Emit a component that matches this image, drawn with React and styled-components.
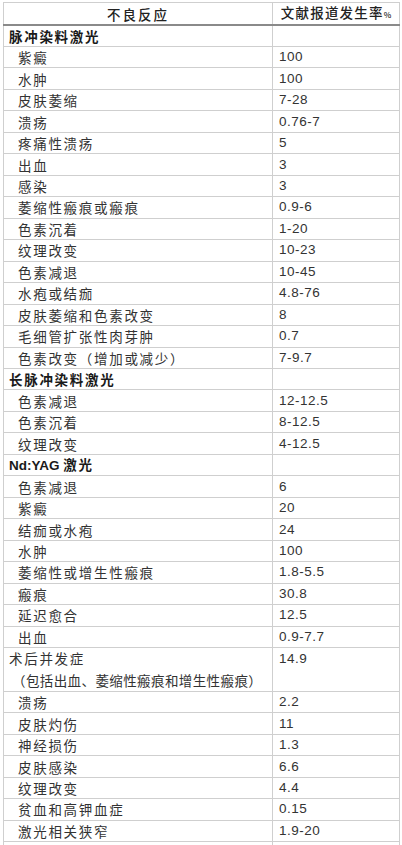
import React from 'react';
import styled, { createGlobalStyle } from 'styled-components';

const GlobalStyle = createGlobalStyle`
  html, body {
    margin: 0;
    padding: 0;
    background: #ffffff;
  }
  body {
    font-family: "Liberation Sans", "Noto Sans CJK SC", sans-serif;
    color: #333;
  }
`;

const Page = styled.div`
  padding: 2px 3px 0 3px;
  height: 845px;
  overflow: hidden;
  box-sizing: border-box;
`;

const Table = styled.table`
  width: 396px;
  border-collapse: collapse;
  table-layout: fixed;
  font-size: 13.5px;
`;

const Row = styled.tr`
  height: ${(p) => (p.$double ? '42.9px' : '21.47px')};
`;

const HeadRow = styled.tr`
  height: 22px;
`;

const HeadCell = styled.th`
  padding: 0;
  font-weight: 500;
  color: #222;
  text-align: center;
  border: 1px solid #cfcfcf;
  border-bottom: 2px solid #8a8a8a;
  line-height: 18px;
  letter-spacing: ${(p) => (p.$wide ? '2px' : '1.2px')};
  font-family: "Noto Sans CJK SC", sans-serif;
  white-space: nowrap;
`;

const Pct = styled.span`
  font-size: 8px;
  letter-spacing: 0;
`;

const Label = styled.td`
  padding: 0 0 0 ${(p) => (p.$indent ? '14px' : '5px')};
  border: 1px solid #cfcfcf;
  vertical-align: ${(p) => (p.$double ? 'top' : 'middle')};
  line-height: ${(p) => (p.$double ? '21.4px' : '18px')};
  font-family: "Noto Sans CJK SC", sans-serif;
  letter-spacing: 1.7px;
  font-weight: ${(p) => (p.$group ? 700 : 400)};
  color: ${(p) => (p.$group ? '#1a1a1a' : '#333')};
  white-space: nowrap;
  overflow: hidden;
`;

const Latin = styled.span`
  font-family: "Liberation Sans", sans-serif;
  letter-spacing: 0;
`;

const SubLine = styled.div`
  padding-left: 3px;
  letter-spacing: 0.4px;
`;

const Value = styled.td`
  padding: 0 0 0 6px;
  border: 1px solid #cfcfcf;
  vertical-align: ${(p) => (p.$top ? 'top' : 'middle')};
  line-height: ${(p) => (p.$top ? '21.4px' : '18px')};
  font-family: "Liberation Sans", sans-serif;
  letter-spacing: 0.5px;
  color: #333;
  white-space: nowrap;
`;

const rows = [
  { g: '脉冲染料激光' },
  ['紫癜', '100'],
  ['水肿', '100'],
  ['皮肤萎缩', '7-28'],
  ['溃疡', '0.76-7'],
  ['疼痛性溃疡', '5'],
  ['出血', '3'],
  ['感染', '3'],
  ['萎缩性瘢痕或瘢痕', '0.9-6'],
  ['色素沉着', '1-20'],
  ['纹理改变', '10-23'],
  ['色素减退', '10-45'],
  ['水疱或结痂', '4.8-76'],
  ['皮肤萎缩和色素改变', '8'],
  ['毛细管扩张性肉芽肿', '0.7'],
  ['色素改变（增加或减少）', '7-9.7'],
  { g: '长脉冲染料激光' },
  ['色素减退', '12-12.5'],
  ['色素沉着', '8-12.5'],
  ['纹理改变', '4-12.5'],
  { g: '激光', latin: 'Nd:YAG ' },
  ['色素减退', '6'],
  ['紫癜', '20'],
  ['结痂或水疱', '24'],
  ['水肿', '100'],
  ['萎缩性或增生性瘢痕', '1.8-5.5'],
  ['瘢痕', '30.8'],
  ['延迟愈合', '12.5'],
  ['出血', '0.9-7.7'],
  { d: ['术后并发症', '（包括出血、萎缩性瘢痕和增生性瘢痕）'], v: '14.9' },
  ['溃疡', '2.2'],
  ['皮肤灼伤', '11'],
  ['神经损伤', '1.3'],
  ['皮肤感染', '6.6'],
  ['纹理改变', '4.4'],
  ['贫血和高钾血症', '0.15'],
  ['激光相关狭窄', '1.9-20'],
  { g: '二氧化碳激光' },
];

const App = () => (
  <>
    <GlobalStyle />
    <Page>
      <Table>
        <colgroup>
          <col style={{ width: '269px' }} />
          <col style={{ width: '127px' }} />
        </colgroup>
        <thead>
          <HeadRow>
            <HeadCell $wide>不良反应</HeadCell>
            <HeadCell>
              文献报道发生率<Pct>%</Pct>
            </HeadCell>
          </HeadRow>
        </thead>
        <tbody>
          {rows.map((r, i) => {
            if (r.g) {
              return (
                <Row key={i}>
                  <Label $group>
                    {r.latin && <Latin>{r.latin}</Latin>}
                    {r.g}
                  </Label>
                  <Value />
                </Row>
              );
            }
            if (r.d) {
              return (
                <Row key={i} $double>
                  <Label $double>
                    {r.d[0]}
                    <SubLine>{r.d[1]}</SubLine>
                  </Label>
                  <Value $top>{r.v}</Value>
                </Row>
              );
            }
            return (
              <Row key={i}>
                <Label $indent>{r[0]}</Label>
                <Value>{r[1]}</Value>
              </Row>
            );
          })}
        </tbody>
      </Table>
    </Page>
  </>
);

export default App;
